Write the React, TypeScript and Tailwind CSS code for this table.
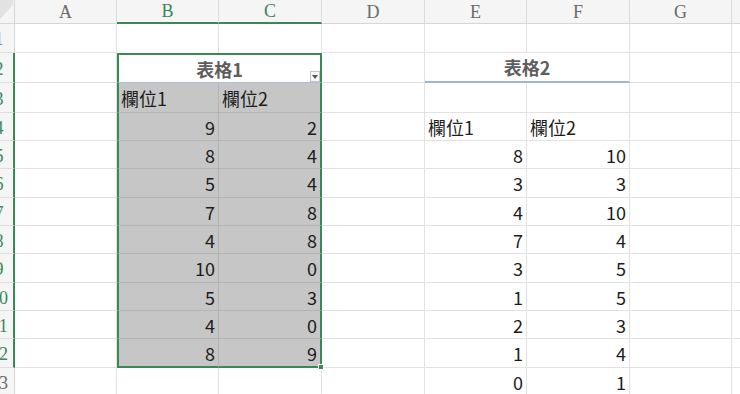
import type { ReactNode } from 'react';

// rows 1..13 of the sheet
const HEIGHTS = [
  'h-[29px]', 'h-[30px]', 'h-[30px]', 'h-[28px]', 'h-[28px]', 'h-[29px]', 'h-[28px]',
  'h-[28px]', 'h-[29px]', 'h-[28px]', 'h-[28px]', 'h-[29px]', 'h-[28px]',
];

const LETTERS = ['A', 'B', 'C', 'D', 'E', 'F', 'G', 'H'];
const WIDTHS = ['w-[102px]', 'w-[102px]', 'w-[103px]', 'w-[103px]', 'w-[102px]', 'w-[103px]', 'w-[102px]', 'w-[102px]'];

// 表格1 data sits in rows 4-12, 表格2 in rows 5-13
const TABLE1 = [[9, 2], [8, 4], [5, 4], [7, 8], [4, 8], [10, 0], [5, 3], [4, 0], [8, 9]];
const TABLE2 = [[8, 10], [3, 3], [4, 10], [7, 4], [3, 5], [1, 5], [2, 3], [1, 4], [0, 1]];

const grid = 'border-b border-r border-[#e2e2e2]';
const text = 'text-[18px] leading-none text-[#1c1c1c]';
const title = 'text-[18px] leading-none font-semibold text-[#5e5e5e]';

const Cell = ({ className, children }: { className: string; children?: ReactNode }) => (
  <div className={`relative flex shrink-0 items-center ${className}`}>{children}</div>
);

const HeaderRow = () => (
  <div className="flex h-[24px]">
    {/* select-all corner */}
    <div className="relative w-[15px] shrink-0 overflow-hidden border-b border-r border-[#d6d6d6] bg-[#f5f5f5]">
      <svg className="absolute left-0 top-0" width="15" height="24" viewBox="0 0 15 24">
        <polygon points="0,0 13,0 13,5 0,19" fill="#e2e2e2" />
      </svg>
    </div>
    {LETTERS.map((l, i) => {
      const on = l === 'B' || l === 'C';
      return (
        <Cell
          key={l}
          className={`${WIDTHS[i]} justify-center bg-[#f5f5f5] border-r border-r-[#dcdcdc] ${
            on ? 'border-b-2 border-b-[#3a8757] text-[#3a8757]' : 'border-b border-b-[#d6d6d6] text-[#6a6a6a]'
          } font-['Liberation_Serif',serif] text-[18px] leading-none`}
        >
          {l}
        </Cell>
      );
    })}
  </div>
);

const SheetRow = ({ r }: { r: number }) => {
  const sel = r >= 2 && r <= 12;
  const t1 = r >= 4 && r <= 12 ? TABLE1[r - 4] : null;
  const t2 = r >= 5 ? TABLE2[r - 5] : null;

  return (
    <div className={`flex ${HEIGHTS[r - 1]}`}>
      {/* row number, mostly scrolled off to the left */}
      <div
        className={`flex w-[15px] shrink-0 items-center overflow-hidden border-b border-b-[#dedede] bg-[#f5f5f5] font-['Liberation_Serif',serif] text-[18px] leading-none ${
          sel ? 'border-r-2 border-r-[#3a8757] text-[#3a8757]' : 'border-r border-r-[#d6d6d6] text-[#6a6a6a]'
        }`}
      >
        <div className="-ml-[16px] w-[30px] shrink-0 pt-[2px] text-center">{r}</div>
      </div>

      {/* A */}
      <Cell className={`w-[102px] ${grid}`} />

      {/* B, C : 表格1 */}
      {r === 1 && (
        <>
          <Cell className="w-[102px] border-r border-[#e2e2e2]" />
          <Cell className="w-[103px] border-r border-[#e2e2e2]" />
        </>
      )}
      {r === 2 && (
        <Cell className={`w-[205px] justify-center border-l-2 border-r-2 border-t-2 border-b border-l-[#3a8757] border-r-[#3a8757] border-t-[#3a8757] border-b-[#a9bfe2] bg-white ${title}`}>
          表格1
          <span className="absolute bottom-0 right-0 flex h-[11px] w-[10px] items-center justify-center border border-[#c4c4c4] bg-[#f7f7f7]">
            <svg width="6" height="4" viewBox="0 0 6 4">
              <polygon points="0,0 6,0 3,4" fill="#555" />
            </svg>
          </span>
        </Cell>
      )}
      {r === 3 && (
        <>
          <Cell className={`w-[102px] border-l-2 border-l-[#3a8757] border-r border-b border-r-[#b4b4b4] border-b-[#b4b4b4] bg-[#c6c6c6] pl-[2px] ${text}`}>欄位1</Cell>
          <Cell className={`w-[103px] border-r-2 border-r-[#3a8757] border-b border-b-[#b4b4b4] bg-[#c6c6c6] pl-[3px] ${text}`}>欄位2</Cell>
        </>
      )}
      {t1 && (
        <>
          <Cell
            className={`w-[102px] justify-end border-l-2 border-l-[#3a8757] border-r border-r-[#b4b4b4] bg-[#c6c6c6] pr-[3px] ${text} ${
              r === 12 ? 'border-b-2 border-b-[#3a8757]' : 'border-b border-b-[#b4b4b4]'
            }`}
          >
            {t1[0]}
          </Cell>
          <Cell
            className={`w-[103px] justify-end border-r-2 border-r-[#3a8757] bg-[#c6c6c6] pr-[3px] ${text} ${
              r === 12 ? 'border-b-2 border-b-[#3a8757]' : 'border-b border-b-[#b4b4b4]'
            }`}
          >
            {t1[1]}
            {r === 12 && (
              <span className="absolute -bottom-[4px] -right-[4px] z-10 h-[6px] w-[6px] border border-white bg-[#3a8757]" />
            )}
          </Cell>
        </>
      )}
      {r === 13 && (
        <>
          <Cell className={`w-[102px] ${grid}`} />
          <Cell className={`w-[103px] ${grid}`} />
        </>
      )}

      {/* D */}
      <Cell className={`w-[103px] ${grid}`} />

      {/* E, F : 表格2 */}
      {r === 2 ? (
        <Cell className={`w-[205px] justify-center border-r border-r-[#e2e2e2] border-b-2 border-b-[#9fb6dc] ${title}`}>表格2</Cell>
      ) : r === 4 ? (
        <>
          <Cell className={`w-[102px] pl-[3px] ${grid} ${text}`}>欄位1</Cell>
          <Cell className={`w-[103px] pl-[3px] ${grid} ${text}`}>欄位2</Cell>
        </>
      ) : t2 ? (
        <>
          <Cell className={`w-[102px] justify-end pr-[3px] ${grid} ${text}`}>{t2[0]}</Cell>
          <Cell className={`w-[103px] justify-end pr-[3px] ${grid} ${text}`}>{t2[1]}</Cell>
        </>
      ) : (
        <>
          <Cell className={`w-[102px] ${grid}`} />
          <Cell className={`w-[103px] ${grid}`} />
        </>
      )}

      {/* G, H */}
      <Cell className={`w-[102px] ${grid}`} />
      <Cell className={`w-[102px] ${grid}`} />
    </div>
  );
};

export default function App() {
  return (
    <div className="h-[394px] w-[740px] overflow-hidden bg-white font-['Noto_Sans_CJK_TC','Noto_Sans',sans-serif]">
      <HeaderRow />
      {HEIGHTS.map((_, i) => (
        <SheetRow key={i} r={i + 1} />
      ))}
    </div>
  );
}
